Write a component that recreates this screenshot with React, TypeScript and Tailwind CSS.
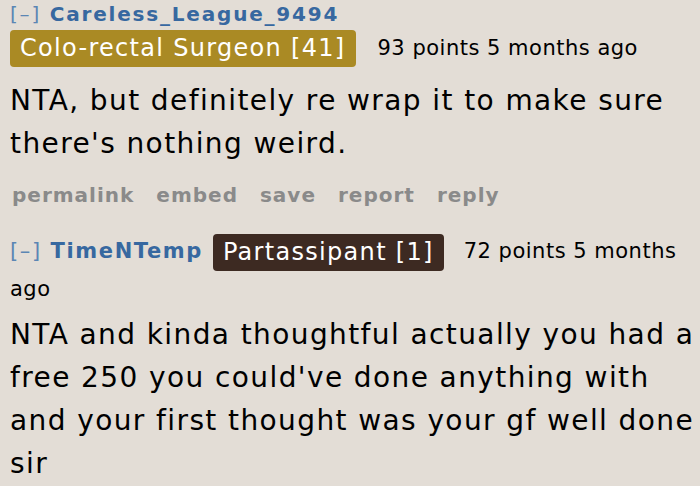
const font = { fontFamily: '"DejaVu Sans", Verdana, sans-serif' };

const actions = ["permalink", "embed", "save", "report", "reply"];

export default function App() {
  return (
    <div className="h-[486px] w-[700px] overflow-hidden bg-[#e3ddd6] pl-[10px] text-black" style={font}>
      <div className="pt-[1px]">
        <div className="text-[20px] font-bold leading-[27px] tracking-[1.8px] text-[#3768a0]">
          <span className="font-normal text-[#5b86b4]">[–]</span> Careless_League_9494
        </div>
        <div className="mt-[2px] flex items-center gap-[22px]">
          <span className="rounded-[4px] bg-[#aa8a24] px-[10px] text-[24px] leading-[37px] tracking-[1.3px] text-white">
            Colo-rectal Surgeon [41]
          </span>
          <span className="text-[21px] tracking-[0.5px]">93 points 5 months ago</span>
        </div>
        <p className="mt-[12px] w-[696px] text-[28px] leading-[43px] tracking-[1.4px]">
          NTA, but definitely re wrap it to make sure there's nothing weird.
        </p>
        <div className="mt-[17px] flex gap-[22px] pl-[2px] text-[20px] font-bold leading-[27px] tracking-[1px] text-[#8a8a8a]">
          {actions.map((a) => (
            <span key={a}>{a}</span>
          ))}
        </div>
      </div>

      <div className="mt-[24px] pr-[10px]">
        <p className="text-[21px] leading-[36px] tracking-[0.5px]">
          <span className="font-bold tracking-[1.6px] text-[#3768a0]">
            <span className="font-normal text-[#5b86b4]">[–]</span> TimeNTemp
          </span>
          <span className="ml-[10px] mr-[20px] inline-block rounded-[4px] bg-[#3d2a22] px-[10px] align-middle text-[24px] leading-[37px] tracking-[1.3px] text-white">
            Partassipant [1]
          </span>
          <span>72 points 5 months</span> <span>ago</span>
        </p>
        <p className="mt-[6px] w-[696px] text-[28px] leading-[43px] tracking-[1.4px]">
          NTA and kinda thoughtful actually you had a free 250 you could've done anything with and your first thought
          was your gf well done sir
        </p>
      </div>
    </div>
  );
}
